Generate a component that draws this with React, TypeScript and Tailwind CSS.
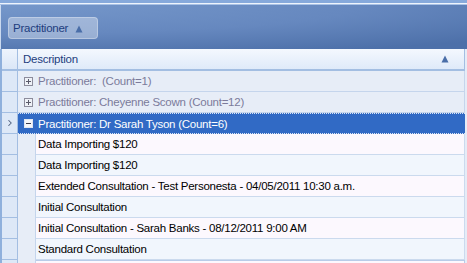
import { ChevronRight } from "lucide-react"

const items = [
  "Data Importing $120",
  "Data Importing $120",
  "Extended Consultation - Test Personesta - 04/05/2011 10:30 a.m.",
  "Initial Consultation",
  "Initial Consultation - Sarah Banks - 08/12/2011 9:00 AM",
  "Standard Consultation",
]

function Triangle({ className }: { className?: string }) {
  return (
    <svg width="8" height="8" viewBox="0 0 8 8" className={className}>
      <path d="M4 0.5 L7.5 7.5 L0.5 7.5 Z" fill="#4a6ea8" />
    </svg>
  )
}

function ExpandBox({ open }: { open?: boolean }) {
  return (
    <span
      className={
        open
          ? "flex h-[9px] w-[9px] items-center justify-center border border-[#dfe6f2] bg-[#f4f6fa]"
          : "flex h-[9px] w-[9px] items-center justify-center border border-[#8c8c9c] bg-[#eef1f7]"
      }
    >
      <svg width="7" height="7" viewBox="0 0 7 7">
        <rect x="1" y="3" width="5" height="1" fill={open ? "#3a3a4a" : "#5a5a6a"} />
        {!open && <rect x="3" y="1" width="1" height="5" fill="#5a5a6a" />}
      </svg>
    </span>
  )
}

function Indicator({ children }: { children?: React.ReactNode }) {
  return (
    <div className="flex h-full w-[16px] shrink-0 items-center justify-center border-r border-b border-[#a3bee2] bg-[#dde8f7]">
      {children}
    </div>
  )
}

export default function App() {
  return (
    <div className="h-[263px] w-[467px] overflow-hidden bg-[#e6ecf7] font-['Liberation_Sans',Arial,sans-serif] text-[11.5px] leading-none tracking-[-0.25px]">
      {/* top strip */}
      <div className="h-[3px] bg-[#86a9db]" />
      <div className="h-px bg-[#eef4fc]" />
      <div className="h-px bg-[#a9c2e6]" />

      {/* group panel */}
      <div className="h-[44px] border-l border-[#cad9ef] bg-[radial-gradient(140%_120%_at_0%_0%,#7597ca_0%,#6688bf_55%,#4d70a9_100%)] pl-[7px] pt-[12px]">
        <div className="flex h-[22px] w-[90px] items-center gap-[7px] rounded-[4px] border border-white/30 bg-white/35 pl-[4px] pt-[1px] text-[#1d3d7e]">
          <span>Practitioner</span>
          <Triangle />
        </div>
      </div>

      {/* grid */}
      <div className="border-l-2 border-[#8fb0dc]">
        {/* header */}
        <div className="flex h-[22px]">
          <div className="h-full w-[16px] shrink-0 border-r border-b-2 border-[#a3bee2] bg-gradient-to-b from-[#eef4fd] to-[#dbe7f7]" />
          <div className="flex h-full w-[447px] items-center justify-between border-r border-b-2 border-[#a3bee2] bg-gradient-to-b from-[#f4f8fe] to-[#dfeaf9] pl-[5px] pr-[15px] pt-[2px] text-[#1d3d7e]">
            <span>Description</span>
            <Triangle className="-mt-[2px]" />
          </div>
        </div>

        {/* group rows */}
        {["Practitioner:  (Count=1)", "Practitioner: Cheyenne Scown (Count=12)"].map((g) => (
          <div key={g} className="flex h-[21px]">
            <Indicator />
            <div className="flex h-full w-[447px] items-center gap-[5px] border-r border-b border-[#c5d5ec] bg-[#e7edf7] pl-[6px] text-[#7b7b9b] whitespace-pre">
              <ExpandBox />
              <span className="pt-[2px]">{g}</span>
            </div>
          </div>
        ))}

        {/* selected group row */}
        <div className="flex h-[21px]">
          <Indicator>
            <ChevronRight size={10} strokeWidth={2.5} className="text-[#4d5f7e]" />
          </Indicator>
          <div className="flex h-full w-[447px] items-center gap-[5px] border-y border-dotted border-[#dbe4f4] bg-[#316ac5] pl-[6px] text-white">
            <ExpandBox open />
            <span className="pt-[2px]">Practitioner: Dr Sarah Tyson (Count=6)</span>
          </div>
        </div>

        {/* data rows */}
        {items.map((t, i) => (
          <div key={i} className="flex h-[21px]">
            <Indicator />
            <div className="h-full w-[18px] shrink-0 border-r border-[#c5d5ec] bg-[#e7edf7]" />
            <div
              className={
                i % 2 === 0
                  ? "flex h-full w-[429px] items-center border-r border-b border-[#cbdaee] bg-[#fcf8fe] pl-[2px] pt-[2px] text-black"
                  : "flex h-full w-[429px] items-center border-r border-b border-[#cbdaee] bg-[#f1f6fd] pl-[2px] pt-[2px] text-black"
              }
            >
              {t}
            </div>
          </div>
        ))}

        <div className="flex h-[21px]">
          <Indicator />
          <div className="h-full w-[18px] shrink-0 border-r border-[#c5d5ec] bg-[#e7edf7]" />
          <div className="h-full w-[429px] border-t border-r border-[#b8cce8] bg-[#fcf8fe]" />
        </div>
      </div>
    </div>
  )
}
